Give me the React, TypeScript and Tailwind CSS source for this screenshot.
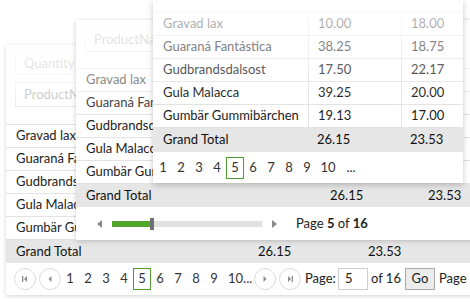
import React from 'react';

const FONT = "font-['Segoe_UI','Lato',sans-serif]";

const products = [
  ['Gravad lax', '10.00', '18.00'],
  ['Guaraná Fantástica', '38.25', '18.75'],
  ['Gudbrandsdalsost', '17.50', '22.17'],
  ['Gula Malacca', '39.25', '20.00'],
  ['Gumbär Gummibärchen', '19.13', '17.00'],
];

// clip: the panel is partly under another one, so only the visible part of the name is kept
function Rows({ w1, w2, clip }: { w1: string; w2: string; clip?: string }) {
  return (
    <>
      {products.map(([name, a, b]) => (
        <div key={name} className="flex h-[23px] border-b border-[#e3e3e3] text-[#222]">
          <div className={`${w1} shrink-0 pl-[10px] flex items-center whitespace-nowrap overflow-hidden`}>
            <span className={clip ? `${clip} block overflow-hidden` : ''}>{name}</span>
          </div>
          <div className={`${w2} shrink-0 pl-[9px] flex items-center border-l border-[#e3e3e3]`}>{clip ? '' : a}</div>
          <div className="flex-1 pl-[9px] flex items-center border-l border-[#e3e3e3]">{clip ? '' : b}</div>
        </div>
      ))}
    </>
  );
}

function GrandTotal({ w1, w2, h }: { w1: string; w2: string; h: string }) {
  return (
    <div className={`flex ${h} bg-[#e6e6e6] text-[#111]`}>
      <div className={`${w1} shrink-0 pl-[10px] flex items-center`}>Grand Total</div>
      <div className={`${w2} shrink-0 pl-[9px] flex items-center`}>26.15</div>
      <div className="flex-1 pl-[9px] flex items-center">23.53</div>
    </div>
  );
}

function PageNums({ dots }: { dots: boolean }) {
  return (
    <>
      {[1, 2, 3, 4, 5, 6, 7, 8, 9].map((n) => (
        <span
          key={n}
          className={`w-[18px] h-[22px] shrink-0 flex items-center justify-center ${
            n === 5 ? 'border border-[#4f9a2c]' : ''
          }`}
        >
          {n}
        </span>
      ))}
      {dots ? (
        <>
          <span className="w-[24px] shrink-0 text-center">10</span>
          <span className="w-[22px] shrink-0 text-center">...</span>
        </>
      ) : (
        <span className="w-[31px] shrink-0 pl-[5px] whitespace-nowrap">10...</span>
      )}
    </>
  );
}

function CircleBtn({ kind }: { kind: 'first' | 'prev' | 'next' | 'last' }) {
  return (
    <span className="w-[22px] h-[22px] rounded-full border border-[#dcdcdc] flex items-center justify-center shrink-0">
      <svg width="10" height="10" viewBox="0 0 10 10" fill="#8a8a8a">
        {kind === 'first' && (
          <>
            <rect x="2" y="2" width="1.3" height="6" />
            <polygon points="7,2 7,8 4,5" />
          </>
        )}
        {kind === 'prev' && <polygon points="6.5,2 6.5,8 3.5,5" />}
        {kind === 'next' && <polygon points="3.5,2 3.5,8 6.5,5" />}
        {kind === 'last' && (
          <>
            <polygon points="3,2 3,8 6,5" />
            <rect x="6.7" y="2" width="1.3" height="6" />
          </>
        )}
      </svg>
    </span>
  );
}

function Chip({ label, className }: { label: string; className: string }) {
  return (
    <div className={`absolute border border-[#dedede] bg-white text-[#888] flex items-center pl-[8px] overflow-hidden whitespace-nowrap ${className}`}>
      {label}
    </div>
  );
}

export default function App() {
  return (
    <div className={`relative w-[470px] h-[302px] overflow-hidden bg-white text-[13px] ${FONT}`}>
      {/* back panel: full pager */}
      <div className="absolute left-[6px] top-[45px] w-[480px] h-[250px] bg-white shadow-[0_1px_4px_rgba(0,0,0,0.18)] flex flex-col">
        <div className="relative h-[80px] shrink-0 border-b border-[#e3e3e3]">
          <Chip label="Quantity" className="left-[9px] top-[8px] w-[60px] h-[22px]" />
          <Chip label="ProductName" className="left-[9px] top-[37px] w-[72px] h-[25px]" />
        </div>
        <Rows w1="w-[243px]" w2="w-[110px]" clip="w-[62px]" />
        <GrandTotal w1="w-[243px]" w2="w-[110px]" h="h-[23px]" />
        <div className="flex items-center h-[32px] pl-[8px] text-[#333]">
          <CircleBtn kind="first" />
          <span className="ml-[3px]">
            <CircleBtn kind="prev" />
          </span>
          <PageNums dots={false} />
          <CircleBtn kind="next" />
          <span className="ml-[3px]">
            <CircleBtn kind="last" />
          </span>
          <span className="ml-[4px] w-[30px] shrink-0 whitespace-nowrap text-[#222]">Page:</span>
          <span className="ml-[3px] w-[30px] h-[22px] shrink-0 border border-[#cfcfcf] flex items-center pl-[6px] text-[#222]">5</span>
          <span className="ml-[3px] w-[30px] shrink-0 whitespace-nowrap text-[#222]">of 16</span>
          <span className="ml-[4px] w-[30px] h-[22px] shrink-0 bg-[#ececec] border border-[#a9a9a9] flex items-center justify-center text-[#222]">
            Go
          </span>
          <span className="ml-[4px] shrink-0 text-[#222]">Page</span>
        </div>
        <div className="pointer-events-none absolute left-0 top-0 w-full h-[82px] bg-linear-to-b from-white/90 via-white/60 via-60% to-transparent" />
      </div>

      {/* middle panel: slider pager */}
      <div className="absolute left-[76px] top-[20px] w-[410px] h-[220px] bg-white shadow-[0_1px_5px_rgba(0,0,0,0.2)] flex flex-col">
        <div className="relative h-[49px] shrink-0 border-b border-[#e3e3e3]">
          <Chip label="ProductName" className="left-[9px] top-[7px] w-[70px] h-[25px]" />
        </div>
        <Rows w1="w-[245px]" w2="w-[98px]" clip="w-[67px]" />
        <GrandTotal w1="w-[245px]" w2="w-[98px]" h="h-[23px]" />
        <div className="flex items-center h-[33px] pl-[21px]">
          <svg width="5" height="8" viewBox="0 0 5 8" fill="#8a8a8a">
            <polygon points="5,0 5,8 0,4" />
          </svg>
          <span className="ml-[10px] w-[38px] h-[6px] bg-[#52a62d]" />
          <span className="w-[4px] h-[12px] bg-[#707070]" />
          <span className="w-[108px] h-[6px] bg-[#e2e2e2]" />
          <svg className="ml-[10px]" width="5" height="8" viewBox="0 0 5 8" fill="#8a8a8a">
            <polygon points="0,0 0,8 5,4" />
          </svg>
          <span className="ml-[19px] text-[#222] whitespace-nowrap">
            Page <b>5</b> of <b>16</b>
          </span>
        </div>
        <div className="pointer-events-none absolute left-0 top-0 w-full h-[95px] bg-linear-to-b from-white/90 via-white/50 via-60% to-transparent" />
      </div>

      {/* front panel: numeric pager */}
      <div className="absolute left-[153px] top-0 w-[310px] h-[183px] bg-white shadow-[0_2px_6px_rgba(0,0,0,0.22)] flex flex-col">
        <div className="h-[13px] shrink-0 border-b border-[#e3e3e3]" />
        <Rows w1="w-[155px]" w2="w-[93px]" />
        <GrandTotal w1="w-[155px]" w2="w-[93px]" h="h-[24px]" />
        <div className="flex items-center h-[31px] pl-[1px] text-[#333]">
          <PageNums dots />
        </div>
        <div className="pointer-events-none absolute left-0 top-0 w-full h-[100px] bg-linear-to-b from-white/85 via-white/40 via-50% to-transparent" />
      </div>
    </div>
  );
}
